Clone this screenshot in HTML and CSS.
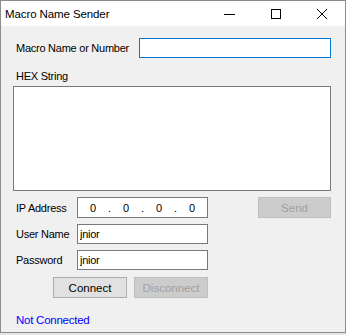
FILE: index.html
```html
<!DOCTYPE html>
<html lang="en">
<head>
  <meta charset="UTF-8">
  <title>Macro Name Sender</title>
  <link rel="stylesheet" href="styles.css">
</head>
<body>
  <div class="window">
    <div class="titlebar">
      <span class="title">Macro Name Sender</span>
      <div class="controls">
        <span class="ctl">
          <svg width="12" height="12" viewBox="0 0 12 12"><path d="M0 6.5h11" stroke="#000" stroke-width="1"/></svg>
        </span>
        <span class="ctl">
          <svg width="12" height="12" viewBox="0 0 12 12"><rect x="1.5" y="1.5" width="9" height="9" fill="none" stroke="#000" stroke-width="1"/></svg>
        </span>
        <span class="ctl">
          <svg width="12" height="12" viewBox="0 0 12 12"><path d="M1 1l10 10M11 1L1 11" stroke="#000" stroke-width="1"/></svg>
        </span>
      </div>
    </div>

    <div class="content">
      <div class="macro-row">
        <label class="lbl">Macro Name or Number</label>
        <input class="field macro focus" type="text">
      </div>

      <label class="lbl hex-lbl">HEX String</label>
      <textarea class="hex"></textarea>

      <div class="conn">
        <div class="fields">
          <div class="frow">
            <label class="lbl">IP Address</label>
            <div class="field ip">
              <span>0</span><span class="dot">.</span><span>0</span><span class="dot">.</span><span>0</span><span class="dot">.</span><span>0</span>
            </div>
          </div>
          <div class="frow">
            <label class="lbl">User Name</label>
            <input class="field" type="text" value="jnior">
          </div>
          <div class="frow">
            <label class="lbl">Password</label>
            <input class="field" type="text" value="jnior">
          </div>
        </div>
        <button class="btn disabled send">Send</button>
      </div>

      <div class="buttons">
        <button class="btn">Connect</button>
        <button class="btn disabled">Disconnect</button>
      </div>

      <div class="status">Not Connected</div>
    </div>
  </div>
</body>
</html>
```

FILE: styles.css
```css
* {
  box-sizing: border-box;
}
body {
  margin: 0;
  background: #e6e6e6;
  font-family: 'Liberation Sans', Arial, sans-serif;
  font-size: 11px;
  letter-spacing: -0.25px;
  color: #000;
}
.window {
  width: 346px;
  height: 333px;
  border: 1px solid #8c8c8c;
  background: #f0f0f0;
}
.titlebar {
  height: 25px;
  background: #fff;
  display: flex;
  align-items: center;
  justify-content: space-between;
}
.title {
  padding-left: 4px;
  font-size: 11.5px;
  letter-spacing: -0.1px;
  line-height: 16px;
}
.controls {
  display: flex;
  height: 100%;
}
.ctl {
  width: 46px;
  display: flex;
  align-items: center;
  justify-content: center;
}
.content {
  padding: 12px 13px 0 12px;
}
.lbl {
  display: block;
  padding-left: 3px;
  line-height: 20px;
  white-space: nowrap;
}
.macro-row {
  display: grid;
  grid-template-columns: 126px 192px;
}
.field {
  height: 20px;
  border: 1px solid #7a7a7a;
  background: #fff;
  font-family: inherit;
  font-size: 11px;
  letter-spacing: -0.25px;
  padding: 0 2px;
  outline: none;
  color: #000;
}
.focus {
  border-color: #0078d7;
}
.hex-lbl {
  margin-top: 8px;
}
.hex {
  display: block;
  width: 318px;
  height: 105px;
  border: 1px solid #7a7a7a;
  background: #fff;
  resize: none;
  outline: none;
}
.conn {
  width: 318px;
  margin-top: 6px;
  display: flex;
  justify-content: space-between;
  align-items: flex-start;
}
.fields {
  display: flex;
  flex-direction: column;
  gap: 6px;
}
.frow {
  display: grid;
  grid-template-columns: 64px 131px;
  align-items: center;
}
.ip {
  height: 21px;
  display: flex;
  justify-content: space-around;
  align-items: center;
  padding: 0 6px;
}
.btn {
  width: 74px;
  height: 21px;
  border: 1px solid #adadad;
  background: #e1e1e1;
  font-family: inherit;
  font-size: 11.5px;
  color: #000;
  padding: 0;
}
.btn.disabled {
  background: #cccccc;
  border-color: #bfbfbf;
  color: #a0a0a0;
}
.send {
  width: 73px;
}
.buttons {
  margin-top: 7px;
  padding-left: 40px;
  display: flex;
  gap: 7px;
}
.status {
  margin-top: 14px;
  padding-left: 3px;
  color: #0000ff;
  font-size: 11.5px;
  line-height: 16px;
}
```
